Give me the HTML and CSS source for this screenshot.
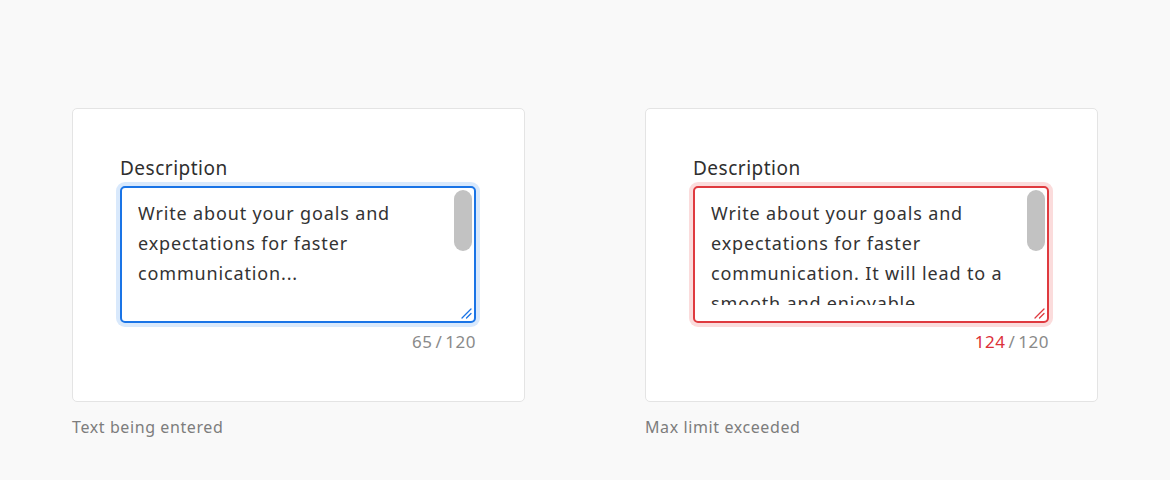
FILE: index.html
```html
<!DOCTYPE html>
<html>
<head>
<meta charset="utf-8">
<link rel="stylesheet" href="styles.css">
</head>
<body>
<div class="page">
  <div class="example">
    <div class="card">
      <div class="label">Description</div>
      <div class="field field-focus">
        <div class="text">Write about your goals and expectations for faster communication...</div>
        <div class="thumb"></div>
        <svg class="grip" width="12" height="12" viewBox="0 0 12 12"><path d="M11 2 L2 11 M11 6.5 L6.5 11" stroke="currentColor" stroke-width="1.3" stroke-linecap="round" fill="none"/></svg>
      </div>
      <div class="counter"><span class="count">65</span>/<span>120</span></div>
    </div>
    <div class="caption">Text being entered</div>
  </div>
  <div class="example">
    <div class="card">
      <div class="label">Description</div>
      <div class="field field-error">
        <div class="text">Write about your goals and expectations for faster communication. It will lead to a smooth and enjoyable experience for everyone on the team.</div>
        <div class="thumb"></div>
        <svg class="grip" width="12" height="12" viewBox="0 0 12 12"><path d="M11 2 L2 11 M11 6.5 L6.5 11" stroke="currentColor" stroke-width="1.3" stroke-linecap="round" fill="none"/></svg>
      </div>
      <div class="counter"><span class="count count-over">124</span>/<span>120</span></div>
    </div>
    <div class="caption">Max limit exceeded</div>
  </div>
</div>
</body>
</html>
```
FILE: styles.css
```css
html, body {
  margin: 0;
  padding: 0;
  background: #f9f9f9;
  font-family: "Noto Sans", "Open Sans", sans-serif;
  color: #333;
}
.page {
  display: flex;
  gap: 120px;
  padding: 108px 0 0 72px;
  height: 480px;
  box-sizing: border-box;
}
.example {
  display: flex;
  flex-direction: column;
}
.card {
  width: 453px;
  height: 294px;
  box-sizing: border-box;
  background: #fff;
  border: 1px solid #e4e4e4;
  border-radius: 5px;
  padding: 46px 48px 0 47px;
}
.label {
  font-size: 19px;
  line-height: 26px;
  letter-spacing: 0.5px;
  color: #2f2f2f;
  margin-bottom: 5px;
}
.field {
  position: relative;
  border: 2px solid #1a74e6;
  border-radius: 5px;
  padding: 10px 44px 16px 16px;
  background: #fff;
}
.field-focus {
  border-color: #1a74e6;
  box-shadow: 0 0 0 4px #d9e9fc;
}
.field-error {
  border-color: #df3a3f;
  box-shadow: 0 0 0 4px #fbdcdc;
}
.text {
  height: 107px;
  overflow: hidden;
  font-size: 18px;
  line-height: 30px;
  letter-spacing: 0.85px;
  color: #333;
}
.thumb {
  position: absolute;
  top: 2px;
  right: 2px;
  width: 18px;
  height: 61px;
  border-radius: 9px;
  background: #c2c2c2;
}
.grip {
  position: absolute;
  right: 2px;
  bottom: 2px;
}
.field-focus .grip { color: #1a74e6; }
.field-error .grip { color: #df3a3f; }
.counter {
  display: flex;
  justify-content: flex-end;
  gap: 3px;
  font-size: 17px;
  line-height: 22px;
  letter-spacing: 0.5px;
  margin-top: 8px;
  color: #8a8a8a;
}
.count-over {
  color: #dc3038;
}
.caption {
  margin-top: 14px;
  font-size: 16px;
  line-height: 22px;
  letter-spacing: 0.6px;
  color: #7d7d7d;
}
```
